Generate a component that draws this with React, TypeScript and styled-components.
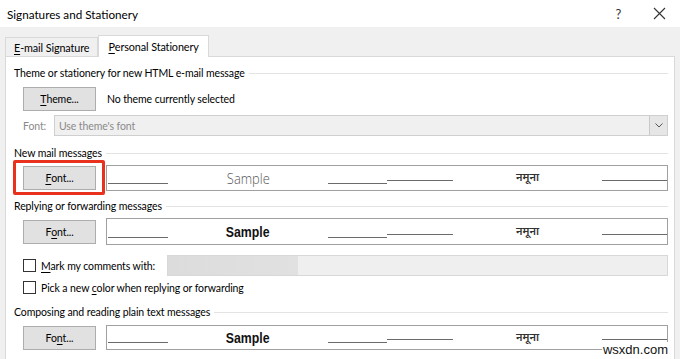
import styled, { createGlobalStyle } from "styled-components";

const GlobalStyle = createGlobalStyle`
  html, body {
    margin: 0;
    padding: 0;
    background: #f0f0f0;
  }
  body {
    font-family: Lato, "Noto Sans", sans-serif;
    font-size: 10.5px;
    letter-spacing: -0.1px;
    color: #000;
  }
`;

const Window = styled.div`
  position: relative;
  width: 680px;
  height: 359px;
  overflow: hidden;
  background: #f0f0f0;
  display: flex;
  flex-direction: column;
`;

const TitleBar = styled.div`
  height: 27px;
  background: #fff;
  display: flex;
  align-items: center;
  padding-left: 7px;
  font-size: 11.7px;
  letter-spacing: 0;
  color: #000;
`;

const TitleText = styled.div`
  flex: 1;
`;

const TitleButton = styled.div`
  width: 41px;
  height: 27px;
  display: flex;
  align-items: center;
  justify-content: center;
  font-size: 13px;
  color: #333;
`;

const TabStrip = styled.div`
  height: 29px;
  display: flex;
  align-items: flex-end;
  padding-left: 5px;
`;

const Tab = styled.div<{ $active?: boolean }>`
  height: ${(p) => (p.$active ? 22 : 19)}px;
  padding: 0 ${(p) => (p.$active ? 9 : 8)}px;
  display: flex;
  align-items: center;
  box-sizing: border-box;
  background: ${(p) => (p.$active ? "#fff" : "#f0f0f0")};
  border: 1px solid #d9d9d9;
  border-bottom: none;
  margin-bottom: ${(p) => (p.$active ? -1 : 0)}px;
  position: relative;
  z-index: ${(p) => (p.$active ? 1 : 0)};
  font-size: 10.8px;
`;

const Key = styled.span`
  text-decoration: underline;
  text-underline-offset: 2px;
`;

const Panel = styled.div`
  flex: 1;
  margin: 0 5px;
  background: #fff;
  border: 1px solid #d9d9d9;
  border-bottom: none;
  padding: 9px 6px 0 8px;
  display: flex;
  flex-direction: column;
`;

const Legend = styled.div<{ $gap: number }>`
  display: flex;
  align-items: center;
  height: 14px;
  margin-top: ${(p) => p.$gap}px;
  white-space: nowrap;
  &::after {
    content: "";
    flex: 1;
    margin-left: 4px;
    border-top: 1px solid #e3e3e3;
  }
`;

const Row = styled.div<{ $gap: number; $h?: number }>`
  display: flex;
  align-items: center;
  margin-top: ${(p) => p.$gap}px;
  margin-left: 9px;
  height: ${(p) => p.$h ?? 24}px;
`;

const Button = styled.div<{ $highlight?: boolean }>`
  position: relative;
  width: 73px;
  height: 24px;
  box-sizing: border-box;
  background: #e1e1e1;
  border: 1px solid #adadad;
  display: flex;
  align-items: center;
  justify-content: center;
  flex-shrink: 0;
  ${(p) =>
    p.$highlight &&
    `
    &::after {
      content: "";
      position: absolute;
      top: -7px;
      left: -11px;
      right: -10px;
      bottom: -6px;
      border: 3px solid #e8321e;
      border-radius: 2px;
    }
  `}
`;

const Plain = styled.span<{ $ml?: number; $color?: string }>`
  margin-left: ${(p) => p.$ml ?? 0}px;
  color: ${(p) => p.$color ?? "#000"};
  white-space: nowrap;
`;

const FontLabel = styled.span`
  width: 31px;
  color: #8a8a8a;
`;

const Select = styled.div`
  flex: 1;
  height: 21px;
  box-sizing: border-box;
  border: 1px solid #cfcfcf;
  background: #f0f0f0;
  display: flex;
  align-items: center;
  padding-left: 4px;
  color: #8a8a8a;
`;

const SelectValue = styled.span`
  flex: 1;
`;

const SelectArrow = styled.div`
  width: 18px;
  height: 19px;
  box-sizing: border-box;
  border-left: 1px solid #c8c8c8;
  background: #e6e6e6;
  display: flex;
  align-items: center;
  justify-content: center;
`;

const Preview = styled.div<{ $h: number }>`
  flex: 1;
  margin-left: 10px;
  height: ${(p) => p.$h}px;
  box-sizing: border-box;
  border: 1px solid #a0a0a0;
  display: flex;
  align-items: flex-start;
`;

const Rule = styled.span<{ $w?: number; $top: number; $ml?: number }>`
  width: ${(p) => (p.$w ? `${p.$w}px` : "auto")};
  flex: ${(p) => (p.$w ? "none" : "1")};
  height: 1px;
  margin-top: ${(p) => p.$top}px;
  margin-left: ${(p) => p.$ml ?? 0}px;
  background: #6a6a6a;
`;

const SampleCell = styled.div<{ $w: number }>`
  width: ${(p) => p.$w}px;
  height: 100%;
  display: flex;
  align-items: center;
  justify-content: center;
`;

const SampleText = styled.span<{ $light?: boolean }>`
  display: inline-block;
  letter-spacing: 0;
  font-family: ${(p) =>
    p.$light ? '"Open Sans", "Noto Sans", sans-serif' : '"Liberation Sans", Arial, sans-serif'};
  font-size: ${(p) => (p.$light ? 14 : 15)}px;
  font-weight: ${(p) => (p.$light ? 300 : 700)};
  color: ${(p) => (p.$light ? "#555" : "#111")};
  transform: scaleX(${(p) => (p.$light ? 0.92 : 0.82)});
`;

const Hindi = styled.span`
  font-family: "Noto Sans Devanagari", "Lohit Devanagari", "FreeSans", "Noto Sans", sans-serif;
  font-size: 11px;
  font-weight: 600;
  letter-spacing: 0;
  color: #333;
`;

const Check = styled.span`
  width: 13px;
  height: 13px;
  box-sizing: border-box;
  border: 1px solid #333;
  background: #fff;
  margin-right: 5px;
  flex-shrink: 0;
`;

const CommentField = styled.div`
  flex: 1;
  height: 21px;
  margin-left: 12px;
  box-sizing: border-box;
  border: 1px solid #d8d8d8;
  background: linear-gradient(to right, #dcdcdc 0, #e1e1e1 26%, #efefef 26%);
`;

const Watermark = styled.div`
  position: absolute;
  right: 11px;
  bottom: 2px;
  padding: 0 1px;
  background: #fff;
  font-family: "Liberation Sans", Arial, sans-serif;
  font-size: 13px;
  letter-spacing: 0;
  color: #111;
`;

const XIcon = () => (
  <svg width="13" height="13" viewBox="0 0 13 13">
    <path d="M1 1 L12 12 M12 1 L1 12" stroke="#333" strokeWidth="1.1" />
  </svg>
);

const Chevron = () => (
  <svg width="8" height="5" viewBox="0 0 8 5">
    <path d="M0.5 0.5 L4 4 L7.5 0.5" stroke="#555" strokeWidth="1" fill="none" />
  </svg>
);

const SampleLine = ({ h, light }: { h: number; light?: boolean }) => (
  <Preview $h={h}>
    <Rule $w={60} $top={h - 9} $ml={1} />
    <SampleCell $w={160}>
      <SampleText $light={light}>Sample</SampleText>
    </SampleCell>
    <Rule $w={59} $top={h - 9} />
    <Rule $w={66} $top={h - 12} />
    <SampleCell $w={149}>
      <Hindi>नमूना</Hindi>
    </SampleCell>
    <Rule $top={h - 12} />
  </Preview>
);

const App = () => (
  <>
    <GlobalStyle />
    <Window>
      <TitleBar>
        <TitleText>Signatures and Stationery</TitleText>
        <TitleButton>?</TitleButton>
        <TitleButton>
          <XIcon />
        </TitleButton>
      </TitleBar>
      <TabStrip>
        <Tab>
          <Key>E</Key>-mail Signature
        </Tab>
        <Tab $active>
          <Key>P</Key>ersonal Stationery
        </Tab>
      </TabStrip>
      <Panel>
        <Legend $gap={0}>Theme or stationery for new HTML e-mail message</Legend>
        <Row $gap={7} $h={23}>
          <Button>
            <Key>T</Key>heme...
          </Button>
          <Plain $ml={11}>No theme currently selected</Plain>
        </Row>
        <Row $gap={5} $h={21}>
          <FontLabel>Font:</FontLabel>
          <Select>
            <SelectValue>Use theme's font</SelectValue>
            <SelectArrow>
              <Chevron />
            </SelectArrow>
          </Select>
        </Row>

        <Legend $gap={10}>New mail messages</Legend>
        <Row $gap={5} $h={26}>
          <Button $highlight>
            <Key>F</Key>ont...
          </Button>
          <SampleLine h={26} light />
        </Row>

        <Legend $gap={8}>Replying or forwarding messages</Legend>
        <Row $gap={5} $h={27}>
          <Button>
            F<Key>o</Key>nt...
          </Button>
          <SampleLine h={27} />
        </Row>

        <Row $gap={10} $h={21}>
          <Check />
          <Plain>
            <Key>M</Key>ark my comments with:
          </Plain>
          <CommentField />
        </Row>
        <Row $gap={4} $h={15}>
          <Check />
          <Plain>
            Pick a new <Key>c</Key>olor when replying or forwarding
          </Plain>
        </Row>

        <Legend $gap={10}>Composing and reading plain text messages</Legend>
        <Row $gap={6} $h={25}>
          <Button>
            Fo<Key>n</Key>t...
          </Button>
          <SampleLine h={25} />
        </Row>
      </Panel>
      <Watermark>wsxdn.com</Watermark>
    </Window>
  </>
);

export default App;
